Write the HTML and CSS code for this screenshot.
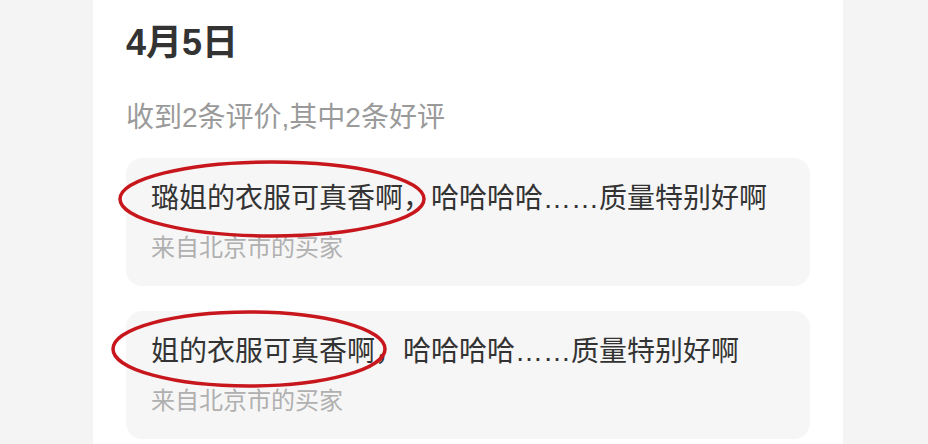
FILE: index.html
```html
<!DOCTYPE html>
<html lang="zh-CN">
<head>
    <meta charset="UTF-8">
    <meta name="viewport" content="width=device-width, initial-scale=1.0">
    <title>评价</title>
    <link rel="stylesheet" href="styles.css">
</head>
<body>
    <div class="card">
        <h1 class="date">4月5日</h1>
        <p class="summary">收到2条评价,其中2条好评</p>

        <div class="review">
            <svg class="mark mark-one" viewBox="0 0 310 80">
                <ellipse cx="155" cy="40" rx="152" ry="37" />
            </svg>
            <p class="review-text">璐姐的衣服可真香啊，哈哈哈哈……质量特别好啊</p>
            <p class="review-from">来自北京市的买家</p>
        </div>

        <div class="review">
            <svg class="mark mark-two" viewBox="0 0 278 80">
                <ellipse cx="139" cy="40" rx="136" ry="37" />
            </svg>
            <p class="review-text">姐的衣服可真香啊，哈哈哈哈……质量特别好啊</p>
            <p class="review-from">来自北京市的买家</p>
        </div>
    </div>
</body>
</html>
```

FILE: styles.css
```css
body {
    margin: 0;
    background-color: #f4f4f4;
    font-family: "Liberation Sans", "Noto Sans CJK SC", sans-serif;
    color: #333;
}
.card {
    width: 750px;
    height: 444px;
    overflow: hidden;
    margin-left: 93px;
    box-sizing: border-box;
    padding: 20px 33px 0;
    background-color: #fff;
}
.date {
    margin: 0;
    font-size: 36px;
    line-height: 46px;
    font-weight: bold;
    color: #333;
}
.summary {
    margin: 32px 0 20px;
    font-size: 28px;
    line-height: 40px;
    color: #9a9a9a;
}
.review {
    position: relative;
    padding: 21px 25px 22px;
    margin-bottom: 25px;
    background-color: #f6f6f6;
    border-radius: 16px;
}
.review-text {
    position: relative;
    margin: 0;
    font-size: 28px;
    line-height: 40px;
    color: #333;
}
.review-from {
    margin: 13px 0 0;
    font-size: 24px;
    line-height: 32px;
    color: #b0b0b0;
}
/* red hand-drawn circles over the text */
.mark {
    position: absolute;
    height: 80px;
    fill: none;
    stroke: #c8161d;
    stroke-width: 3.5;
    z-index: 1;
}
.mark-one {
    left: -9px;
    top: 1px;
    width: 310px;
}
.mark-two {
    left: -16px;
    top: -2px;
    width: 278px;
}
```
